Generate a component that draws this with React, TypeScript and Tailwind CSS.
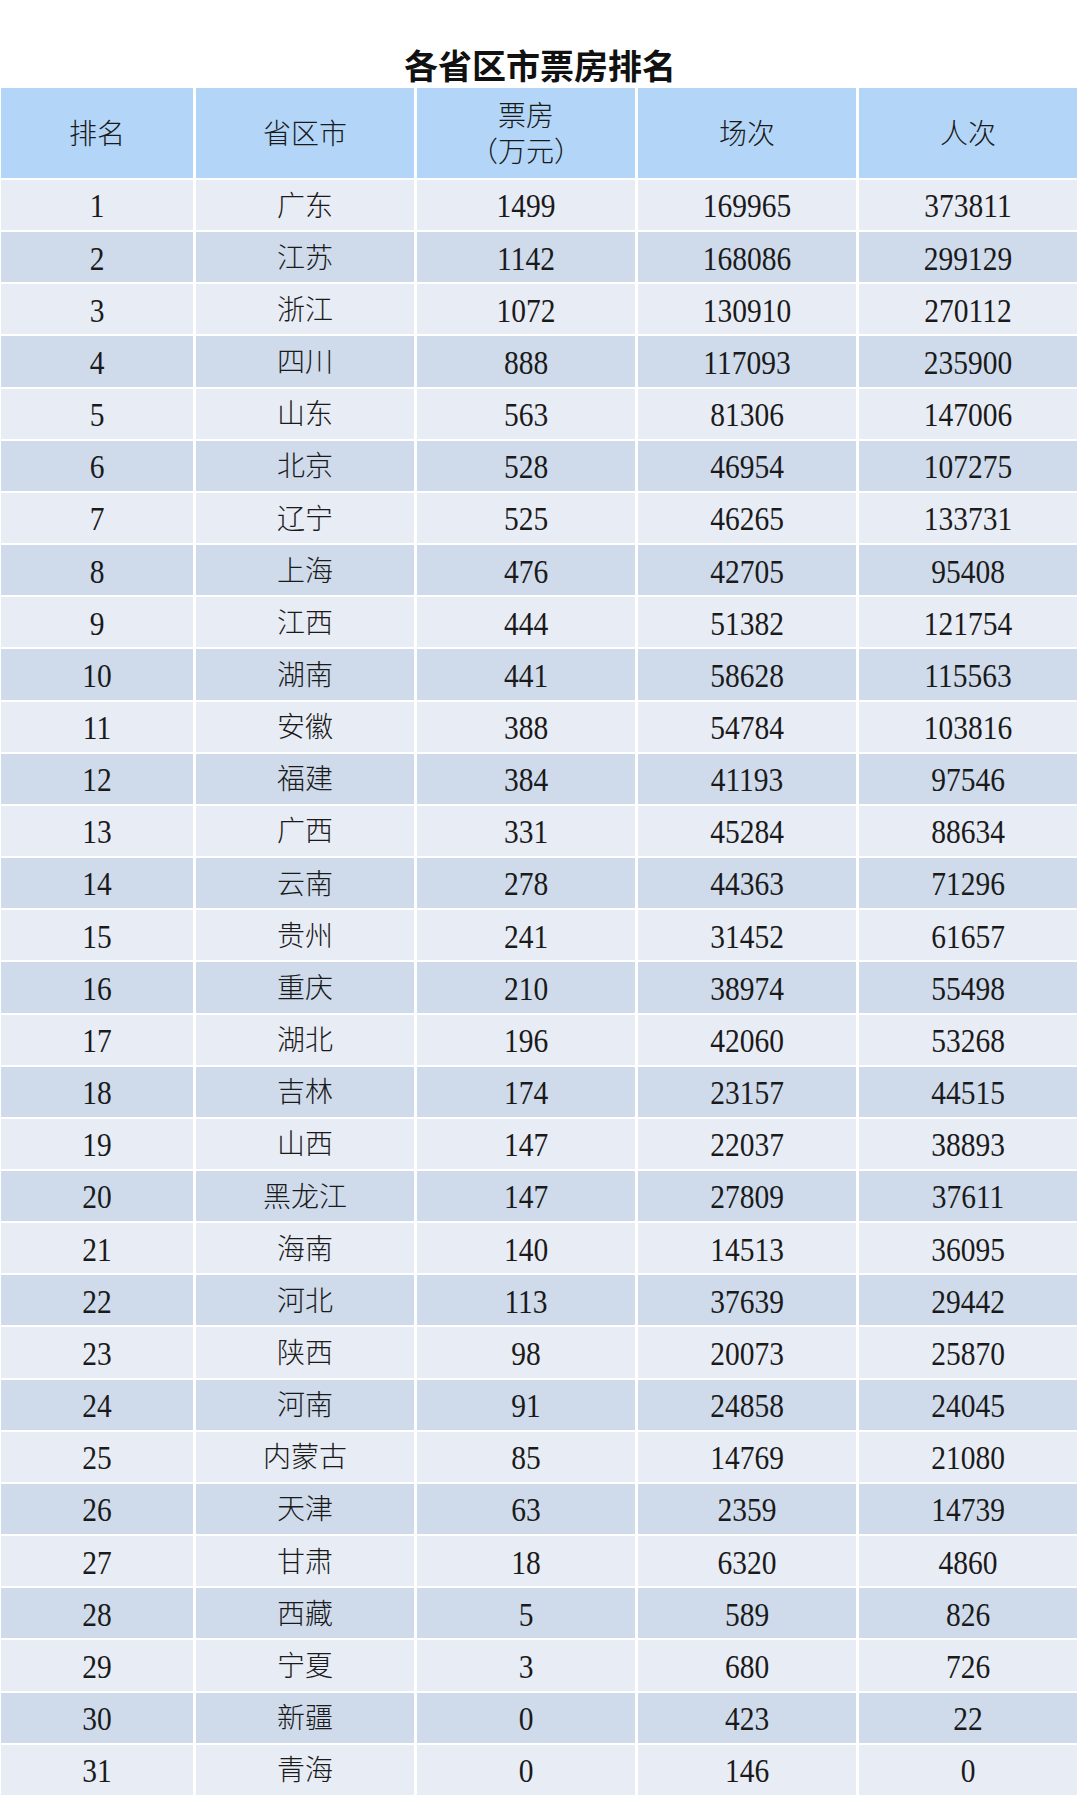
import clsx from "clsx";

type Row = [number, string, number, number, number];

const rows: Row[] = [
  [1, "广东", 1499, 169965, 373811],
  [2, "江苏", 1142, 168086, 299129],
  [3, "浙江", 1072, 130910, 270112],
  [4, "四川", 888, 117093, 235900],
  [5, "山东", 563, 81306, 147006],
  [6, "北京", 528, 46954, 107275],
  [7, "辽宁", 525, 46265, 133731],
  [8, "上海", 476, 42705, 95408],
  [9, "江西", 444, 51382, 121754],
  [10, "湖南", 441, 58628, 115563],
  [11, "安徽", 388, 54784, 103816],
  [12, "福建", 384, 41193, 97546],
  [13, "广西", 331, 45284, 88634],
  [14, "云南", 278, 44363, 71296],
  [15, "贵州", 241, 31452, 61657],
  [16, "重庆", 210, 38974, 55498],
  [17, "湖北", 196, 42060, 53268],
  [18, "吉林", 174, 23157, 44515],
  [19, "山西", 147, 22037, 38893],
  [20, "黑龙江", 147, 27809, 37611],
  [21, "海南", 140, 14513, 36095],
  [22, "河北", 113, 37639, 29442],
  [23, "陕西", 98, 20073, 25870],
  [24, "河南", 91, 24858, 24045],
  [25, "内蒙古", 85, 14769, 21080],
  [26, "天津", 63, 2359, 14739],
  [27, "甘肃", 18, 6320, 4860],
  [28, "西藏", 5, 589, 826],
  [29, "宁夏", 3, 680, 726],
  [30, "新疆", 0, 423, 22],
  [31, "青海", 0, 146, 0],
];

const grid = "grid grid-cols-[192px_218px_218px_218px_218px] gap-x-[3px]";
const serif = "font-['Liberation_Serif','Noto_Sans_CJK_SC',serif]";
const head = "bg-[#b3d6f8] flex items-center justify-center pt-[4px]";

export default function App() {
  return (
    <div className="w-[1080px] h-[1800px] bg-white text-[#1a1a1a] overflow-hidden">
      <h1 className="pt-[48px] h-[88px] text-center text-[34px] leading-[34px] font-bold font-['Noto_Sans_CJK_SC',sans-serif] text-[#111]">
        各省区市票房排名
      </h1>

      <div className={clsx("pl-[1px] flex flex-col gap-y-[2px]", serif)}>
        <div className={clsx(grid, "h-[90px] text-[28px] leading-[36px] font-light")}>
          <div className={head}>排名</div>
          <div className={head}>省区市</div>
          <div className={clsx(head, "flex-col")}>
            <span>票房</span>
            <span>（万元）</span>
          </div>
          <div className={head}>场次</div>
          <div className={head}>人次</div>
        </div>

        {rows.map((r, i) => (
          <div key={r[0]} className={clsx(grid, "h-[50.17px]")}>
            {r.map((cell, j) => (
              <div
                key={j}
                className={clsx(
                  "flex items-center justify-center pt-[3px]",
                  i % 2 === 0 ? "bg-[#e8ecf5]" : "bg-[#cfdbeb]"
                )}
              >
                {j === 1 ? (
                  <span className="text-[28px] font-light">{cell}</span>
                ) : (
                  <span className="inline-block text-[29.5px] scale-y-[1.12]">{cell}</span>
                )}
              </div>
            ))}
          </div>
        ))}
      </div>
    </div>
  );
}
